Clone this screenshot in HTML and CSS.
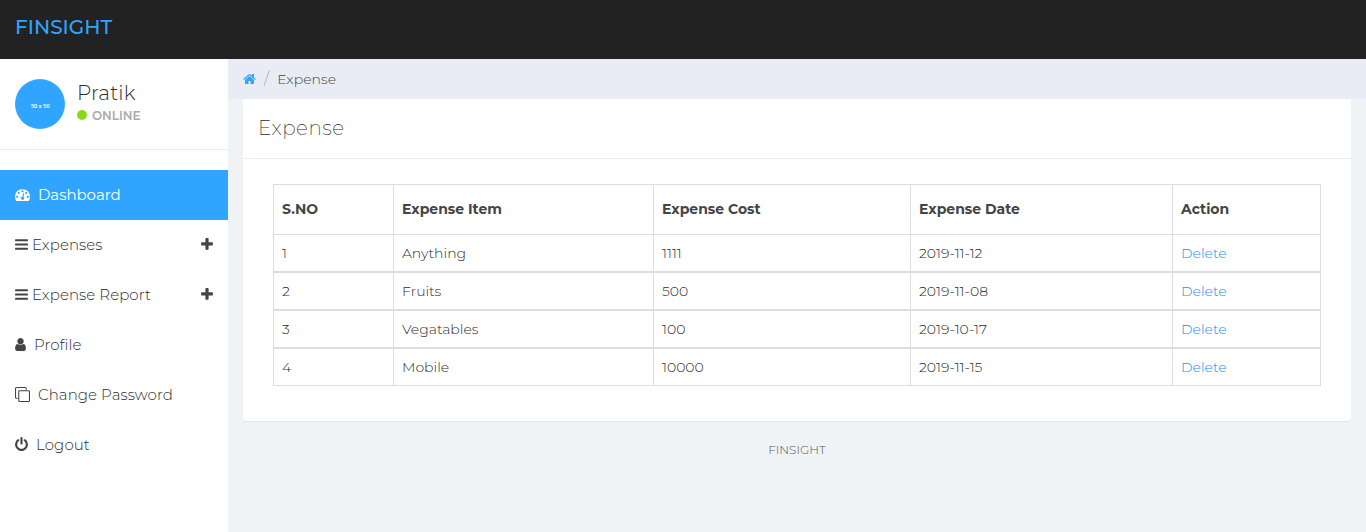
FILE: index.html
```html
<!DOCTYPE html>
<html lang="en">
<head>
<meta charset="utf-8">
<title>Finsight - Expense</title>
<link rel="stylesheet" href="styles.css">
</head>
<body>
<header class="navbar"><a class="brand">FINSIGHT</a></header>
<div class="layout">
  <aside class="sidebar">
    <div class="profile">
      <div class="avatar">50 x 50</div>
      <div class="who">
        <div class="name">Pratik</div>
        <div class="status"><span class="dot"></span><span class="online">ONLINE</span></div>
      </div>
    </div>
    <nav class="menu">
      <a class="item active"><svg class="icon" width="15" height="15" viewBox="0 0 1792 1792"><path d="M384 1152q0-53-37.500-90.500t-90.500-37.500-90.500 37.500-37.500 90.500 37.500 90.500 90.500 37.500 90.500-37.500 37.500-90.500zm192-448q0-53-37.500-90.500t-90.500-37.500-90.500 37.500-37.500 90.500 37.500 90.500 90.500 37.500 90.500-37.500 37.500-90.500zm428 481l101-382q6-26-7.500-48.500t-38.500-29.500-48 6.500-30 39.500l-101 382q-60 5-107 43.500t-63 98.500q-20 77 20 146t117 89 146-20 89-117q16-60-6-117t-72-91zm660-33q0-53-37.500-90.500t-90.500-37.500-90.500 37.500-37.500 90.500 37.500 90.500 90.500 37.500 90.500-37.500 37.500-90.500zm-640-640q0-53-37.500-90.500t-90.500-37.500-90.500 37.500-37.500 90.500 37.500 90.500 90.500 37.500 90.500-37.500 37.500-90.500zm448 192q0-53-37.500-90.500t-90.500-37.500-90.500 37.500-37.500 90.500 37.500 90.500 90.500 37.500 90.500-37.500 37.500-90.500zm320 448q0 261-141 483-19 29-54 29h-1402q-35 0-54-29-141-221-141-483 0-182 71-348t191-286 286-191 348-71 348 71 286 191 191 286 71 348z"/></svg><span class="label">Dashboard</span></a>
      <a class="item tight"><svg class="icon" width="13" height="15" viewBox="128 0 1536 1792"><path d="M192 256h1408q64 0 64 64v128q0 64-64 64h-1408q-64 0-64-64v-128q0-64 64-64zM192 768h1408q64 0 64 64v128q0 64-64 64h-1408q-64 0-64-64v-128q0-64 64-64zM192 1280h1408q64 0 64 64v128q0 64-64 64h-1408q-64 0-64-64v-128q0-64 64-64z"/></svg><span class="label">Expenses</span><svg class="icon plus" width="12" height="15" viewBox="192 0 1408 1792"><path d="M1600 736v192q0 40-28 68t-68 28h-416v416q0 40-28 68t-68 28h-192q-40 0-68-28t-28-68v-416h-416q-40 0-68-28t-28-68v-192q0-40 28-68t68-28h416v-416q0-40 28-68t68-28h192q40 0 68 28t28 68v416h416q40 0 68 28t28 68z"/></svg></a>
      <a class="item tight"><svg class="icon" width="13" height="15" viewBox="128 0 1536 1792"><path d="M192 256h1408q64 0 64 64v128q0 64-64 64h-1408q-64 0-64-64v-128q0-64 64-64zM192 768h1408q64 0 64 64v128q0 64-64 64h-1408q-64 0-64-64v-128q0-64 64-64zM192 1280h1408q64 0 64 64v128q0 64-64 64h-1408q-64 0-64-64v-128q0-64 64-64z"/></svg><span class="label">Expense Report</span><svg class="icon plus" width="12" height="15" viewBox="192 0 1408 1792"><path d="M1600 736v192q0 40-28 68t-68 28h-416v416q0 40-28 68t-68 28h-192q-40 0-68-28t-28-68v-416h-416q-40 0-68-28t-28-68v-192q0-40 28-68t68-28h416v-416q0-40 28-68t68-28h192q40 0 68 28t28 68v416h416q40 0 68 28t28 68z"/></svg></a>
      <a class="item"><svg class="icon" width="11" height="15" viewBox="256 0 1280 1792"><path d="M1536 1399q0 109-62.500 187t-150.500 78h-854q-88 0-150.500-78t-62.500-187q0-85 8.500-160.500t31.500-152 58.500-131 94-89 134.500-34.500q131 128 313 128t313-128q76 0 134.500 34.500t94 89 58.500 131 31.500 152 8.500 160.500zm-256-887q0 159-112.500 271.500t-271.500 112.500-271.500-112.500-112.500-271.500 112.500-271.500 271.500-112.500 271.500 112.500 112.500 271.500z"/></svg><span class="label">Profile</span></a>
      <a class="item"><svg class="icon" width="15" height="15" viewBox="0 0 1792 1792"><path d="M1664 1632v-1088q0-13-9.500-22.500t-22.500-9.500h-1088q-13 0-22.500 9.500t-9.500 22.500v1088q0 13 9.500 22.500t22.500 9.500h1088q13 0 22.500-9.500t9.500-22.500zm128-1088v1088q0 66-47 113t-113 47h-1088q-66 0-113-47t-47-113v-1088q0-66 47-113t113-47h1088q66 0 113 47t47 113zm-384-384v160h-128v-160q0-13-9.500-22.500t-22.500-9.500h-1088q-13 0-22.500 9.500t-9.500 22.500v1088q0 13 9.500 22.500t22.500 9.500h160v128h-160q-66 0-113-47t-47-113v-1088q0-66 47-113t113-47h1088q66 0 113 47t47 113z"/></svg><span class="label">Change Password</span></a>
      <a class="item"><svg class="icon" width="13" height="15" viewBox="128 0 1536 1792"><path d="M1664 896q0 156-61 298t-164 245-245 164-298 61-298-61-245-164-164-245-61-298q0-182 80.500-343t226.500-270q43-32 95.500-25t83.500 50q32 42 24.500 94.500t-49.500 84.500q-98 74-151.500 181t-53.500 228q0 104 40.500 198.500t109.500 163.500 163.500 109.500 198.500 40.500 198.500-40.500 163.500-109.500 109.500-163.500 40.500-198.500q0-121-53.500-228t-151.500-181q-42-32-49.500-84.500t24.500-94.500q31-43 84-50t95 25q146 109 226.500 270t80.500 343zm-640-768v640q0 52-38 90t-90 38-90-38-38-90v-640q0-52 38-90t90-38 90 38 38 90z"/></svg><span class="label">Logout</span></a>
    </nav>
  </aside>
  <main class="main">
    <div class="breadcrumb">
      <svg class="home" width="13" height="14" viewBox="64 0 1664 1792"><path d="M1472 992v480q0 26-19 45t-45 19h-384v-384h-256v384h-384q-26 0-45-19t-19-45v-480q0-1 .5-3t.5-3l575-474 575 474q1 2 1 6zm223-69l-62 74q-8 9-21 11h-3q-13 0-21-7l-692-577-692 577q-12 8-24 7-13-2-21-11l-62-74q-8-10-7-23.500t11-21.500l719-599q32-26 76-26t76 26l244 204v-195q0-14 9-23t23-9h192q14 0 23 9t9 23v408l219 182q10 8 11 21.500t-7 23.500z"/></svg>
      <span class="slash">/</span><span class="crumb">Expense</span>
    </div>
    <section class="panel">
      <h1 class="panel-title">Expense</h1>
      <div class="panel-body">
        <table class="table">
          <colgroup><col class="c1"><col class="c2"><col class="c3"><col class="c4"><col class="c5"></colgroup>
          <thead><tr><th>S.NO</th><th>Expense Item</th><th>Expense Cost</th><th>Expense Date</th><th>Action</th></tr></thead>
          <tbody>
            <tr><td>1</td><td>Anything</td><td>1111</td><td>2019-11-12</td><td><a class="del">Delete</a></td></tr>
            <tr><td>2</td><td>Fruits</td><td>500</td><td>2019-11-08</td><td><a class="del">Delete</a></td></tr>
            <tr><td>3</td><td>Vegatables</td><td>100</td><td>2019-10-17</td><td><a class="del">Delete</a></td></tr>
            <tr><td>4</td><td>Mobile</td><td>10000</td><td>2019-11-15</td><td><a class="del">Delete</a></td></tr>
          </tbody>
        </table>
      </div>
    </section>
    <footer class="footer">FINSIGHT</footer>
  </main>
</div>
</body>
</html>
```
FILE: styles.css
```css
* { box-sizing: border-box; }
body { margin: 0; height: 532px; overflow: hidden; display: flex; flex-direction: column; background: #eff3f6; color: #2c2c2c; font-family: Montserrat, Inter, sans-serif; font-size: 14px; font-weight: 300; }
.navbar { height: 59px; flex: none; background: #222; padding: 15px; }
.brand { display: block; color: #30a5ff; font-size: 20px; line-height: 24px; font-weight: 500; }
.layout { display: flex; flex: 1; }
.sidebar { width: 228px; flex: none; background: #fff; }
.profile { height: 91px; padding: 20px 15px; display: flex; gap: 12px; border-bottom: 1px solid #e9ecf2; }
.avatar { width: 50px; height: 50px; border-radius: 50%; background: #30a5ff; color: #fff; font: 600 6px/54px "Open Sans", sans-serif; letter-spacing: -0.2px; text-align: center; }
.name { font-size: 20px; line-height: 28px; letter-spacing: 0.2px; }
.status { display: flex; align-items: center; gap: 5px; height: 16px; }
.dot { width: 10px; height: 10px; border-radius: 50%; background: #8ad919; }
.online { color: #aaa; font-size: 12px; font-weight: 600; }
.menu { padding-top: 20px; }
.item { height: 50px; padding: 0 15px; display: flex; align-items: center; gap: 8px; font-size: 15px; letter-spacing: 0.07px; }
.label { margin-bottom: 2px; }
.tight { gap: 4px; }
.icon { fill: #444; flex: none; margin-bottom: 1px; }
.plus { margin-left: auto; margin-bottom: 2px; }
.active { background: #30a5ff; color: #fff; font-weight: 400; letter-spacing: -0.05px; }
.active .icon { fill: #fff; margin-bottom: 2px; }
.main { flex: 1; }
.breadcrumb { height: 40px; background: #e9ecf5; padding: 0 15px; display: flex; align-items: center; color: #444; }
.crumb { letter-spacing: 0.07px; }
.home { fill: #30a5ff; }
.slash { color: #aaa; font-size: 16px; line-height: 16px; margin: 0 8px; }
.panel { margin: 0 15px; height: 323px; background: #fff; border-bottom: 1px solid #e0e5e8; border-radius: 0 0 4px 4px; }
.panel-title { margin: 0; height: 60px; padding: 0 15px; border-bottom: 1px solid #e9ecf2; font-size: 20px; line-height: 59px; font-weight: 200; letter-spacing: 0.5px; }
.panel-body { padding: 25px 30px; }
.table { width: 1048px; table-layout: fixed; border-collapse: separate; border-spacing: 0; border: solid #ddd; border-width: 1px 0 0 1px; }
.c1 { width: 120px; }
.c2 { width: 260px; }
.c3 { width: 257px; }
.c4 { width: 262px; }
.c5 { width: 148px; }
.table th, .table td { text-align: left; padding: 0 8px; border: solid #ddd; border-width: 0 1px 1px 0; line-height: 20px; }
.table th { height: 50px; padding-bottom: 2px; font-weight: 700; color: #444; }
.table td { height: 38px; border-bottom-width: 2px; }
.table tbody tr:last-child td { height: 37px; border-bottom-width: 1px; }
.del { color: #2290ea; }
.footer { text-align: center; margin-top: 20px; line-height: 16px; font-size: 12px; color: #555; }
```
